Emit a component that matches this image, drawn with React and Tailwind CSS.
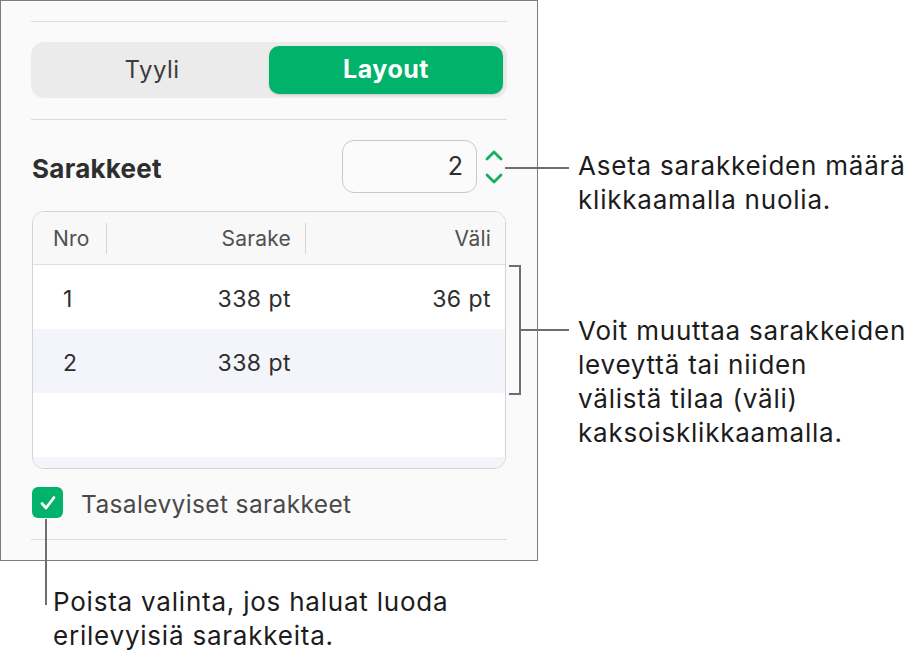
import React from 'react';

const rows = [
  { nro: '1', sarake: '338 pt', vali: '36 pt' },
  { nro: '2', sarake: '338 pt', vali: '' },
  { nro: '', sarake: '', vali: '' },
];

const Callout = ({ className, children }) => (
  <div className={`absolute text-[26px] leading-[34px] tracking-[0.03em] text-[#1c1c1c] ${className}`}>{children}</div>
);

const App = () => {
  return (
    <div className="relative w-[920px] h-[660px] bg-white overflow-hidden" style={{ fontFamily: 'Inter, "Noto Sans", sans-serif' }}>
      {/* Inspector panel */}
      <div className="w-[538px] h-[561px] border border-[#7c7c7c] bg-[#fafafa] px-[30px] pt-[20px]">
        <div className="border-t border-[#dcdcdc]" />

        <div className="mt-[20px] h-[56px] rounded-[13px] bg-[#ebebeb] p-[4px] flex">
          <div className="flex-1 flex items-center justify-center text-[24px] tracking-[0.02em] text-[#3c3c3c]">Tyyli</div>
          <div className="flex-1 flex items-center justify-center rounded-[10px] bg-[#00b26a] text-[25px] tracking-[0.02em] font-bold text-white shadow-[0_1px_2px_rgba(0,0,0,0.15)]">
            Layout
          </div>
        </div>

        <div className="mt-[21px] border-t border-[#dcdcdc]" />

        <div className="mt-[20px] flex items-center justify-between pl-[1px] pr-[4px]">
          <span className="text-[26px] font-bold tracking-[0.01em] text-[#2e2e2e] pt-[3px]">Sarakkeet</span>
          <div className="flex items-center gap-[8px]">
            <div className="w-[135px] h-[53px] rounded-[12px] border-[1.5px] border-[#c9c9c9] bg-[#fbfbfb] flex items-center justify-end pr-[13px] text-[25px] text-[#2e2e2e]">
              2
            </div>
            <svg width="18" height="34" viewBox="0 0 18 34" fill="none" stroke="#10b060" strokeWidth="2.8" strokeLinecap="round" strokeLinejoin="round">
              <polyline points="2,9 9,2 16,9" />
              <polyline points="2,25 9,32 16,25" />
            </svg>
          </div>
        </div>

        <div className="mt-[18px] ml-[1px] mr-[1px] h-[258px] rounded-[12px] border-[1.5px] border-[#d3d3d3] overflow-hidden bg-white flex flex-col">
          <div className="h-[53px] shrink-0 bg-[#f8f8f8] border-b-[1.5px] border-[#dedede] flex items-center text-[21px] tracking-[0.01em] text-[#505050]">
            <div className="w-[73px] pl-[20px] pt-[2px]">Nro</div>
            <div className="w-px h-[31px] bg-[#d6d6d6]" />
            <div className="w-[198px] text-right pr-[14px] pt-[2px]">Sarake</div>
            <div className="w-px h-[31px] bg-[#d6d6d6]" />
            <div className="flex-1 text-right pr-[14px] pt-[2px]">Väli</div>
          </div>
          {rows.map((r, i) => (
            <div key={i} className={`h-[64px] shrink-0 flex items-center pt-[4px] text-[23px] tracking-[0.02em] text-[#2e2e2e] ${i % 2 === 1 ? 'bg-[#f4f5fa]' : 'bg-white'}`}>
              <div className="w-[73px] pl-[30px]">{r.nro}</div>
              <div className="w-[185px] text-right">{r.sarake}</div>
              <div className="flex-1 text-right pr-[14px]">{r.vali}</div>
            </div>
          ))}
          <div className="flex-1 bg-[#f4f5fa]" />
        </div>

        <div className="mt-[18px] flex items-center gap-[18px] pl-[1px]">
          <div className="w-[31px] h-[31px] rounded-[6px] bg-[#00b26a] flex items-center justify-center">
            <svg width="20" height="20" viewBox="0 0 20 20" fill="none" stroke="white" strokeWidth="2.8" strokeLinecap="round" strokeLinejoin="round">
              <polyline points="4,10.5 8,15 16,4.5" />
            </svg>
          </div>
          <span className="text-[24.5px] leading-none tracking-[0.015em] text-[#4a4a4a] pt-[4px]">Tasalevyiset sarakkeet</span>
        </div>

        <div className="mt-[21px] border-t border-[#dcdcdc]" />
      </div>

      {/* Callout: stepper */}
      <div className="absolute left-[505px] top-[167px] w-[64px] h-[2px] bg-[#6e6e6e]" />
      <Callout className="left-[578px] top-[149px]">
        Aseta sarakkeiden määrä
        <br />
        klikkaamalla nuolia.
      </Callout>

      {/* Callout: bracket over rows */}
      <div className="absolute left-[509px] top-[265px] w-[12px] h-[130px] border-t-2 border-r-2 border-b-2 border-[#6e6e6e]" />
      <div className="absolute left-[520px] top-[329px] w-[49px] h-[2px] bg-[#6e6e6e]" />
      <Callout className="left-[578px] top-[314px]">
        Voit muuttaa sarakkeiden
        <br />
        leveyttä tai niiden
        <br />
        välistä tilaa (väli)
        <br />
        kaksoisklikkaamalla.
      </Callout>

      {/* Callout: checkbox */}
      <div className="absolute left-[45px] top-[519px] w-[2px] h-[86px] bg-[#6e6e6e]" />
      <Callout className="left-[53px] top-[585px]">
        Poista valinta, jos haluat luoda
        <br />
        erilevyisiä sarakkeita.
      </Callout>
    </div>
  );
};

export default App;
